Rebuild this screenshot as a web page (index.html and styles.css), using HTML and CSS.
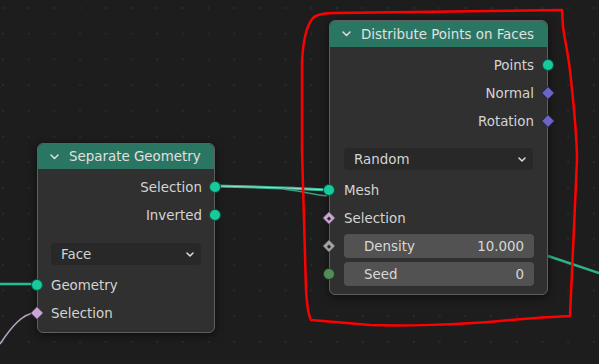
FILE: index.html
```html
<!DOCTYPE html>
<html lang="en">
<head>
    <meta charset="UTF-8">
    <title>Geometry Nodes</title>
    <link rel="stylesheet" href="styles.css">
</head>
<body>
    <div class="editor">
        <svg class="links" width="599" height="364" viewBox="0 0 599 364">
            <path d="M0 284 L37 284" stroke="#1fbf95" stroke-width="2.5" fill="none"/>
            <path d="M0 344 C12 326 22 314 37 312" stroke="#b5a2c0" stroke-width="1.6" fill="none"/>
            <path d="M215 186 C260 187 290 188 329 190" stroke="#3bb592" stroke-width="3" fill="none"/>
            <path d="M215 186 C260 187 290 188 329 190" stroke="#8fe3cb" stroke-width="1" fill="none"/>
            <path d="M283 189 C300 191 312 194 327 196" stroke="#3a9b80" stroke-width="1.5" fill="none"/>
            <path d="M548 256 L599 273" stroke="#2fb08b" stroke-width="2.5" fill="none"/>
        </svg>

        <!-- Separate Geometry -->
        <div class="node node-separate">
            <div class="node-header">
                <svg class="chev" width="9" height="6" viewBox="0 0 9 6"><polyline points="1,1 4.5,4.5 8,1" /></svg>
                <span>Separate Geometry</span>
            </div>
            <div class="node-body">
                <div class="row out"><span>Selection</span><i class="socket geo"></i></div>
                <div class="row out"><span>Inverted</span><i class="socket geo"></i></div>
                <div class="select select-sep">
                    <span>Face</span>
                    <svg class="chev-small" width="8" height="5" viewBox="0 0 8 5"><polyline points="1,1 4,4 7,1" /></svg>
                </div>
                <div class="row in row-gap"><i class="socket geo"></i><span>Geometry</span></div>
                <div class="row in"><i class="socket diamond bool"></i><span>Selection</span></div>
            </div>
        </div>

        <!-- Distribute Points on Faces -->
        <div class="node node-distribute">
            <div class="node-header">
                <svg class="chev" width="9" height="6" viewBox="0 0 9 6"><polyline points="1,1 4.5,4.5 8,1" /></svg>
                <span>Distribute Points on Faces</span>
            </div>
            <div class="node-body">
                <div class="row out"><span>Points</span><i class="socket geo"></i></div>
                <div class="row out"><span>Normal</span><i class="socket diamond vec"></i></div>
                <div class="row out"><span>Rotation</span><i class="socket diamond vec"></i></div>
                <div class="select select-dist">
                    <span>Random</span>
                    <svg class="chev-small" width="8" height="5" viewBox="0 0 8 5"><polyline points="1,1 4,4 7,1" /></svg>
                </div>
                <div class="row in row-gap"><i class="socket geo"></i><span>Mesh</span></div>
                <div class="row in"><i class="socket diamond bool dotted"></i><span>Selection</span></div>
                <div class="row in"><i class="socket diamond float dotted"></i>
                    <div class="value-field"><span>Density</span><span>10.000</span></div>
                </div>
                <div class="row in"><i class="socket int"></i>
                    <div class="value-field"><span>Seed</span><span>0</span></div>
                </div>
            </div>
        </div>

        <svg class="mark" width="599" height="364" viewBox="0 0 599 364">
            <path d="M302 62 C303 42 306 26 313 18 C317 14 324 13 336 13 L562 10 L563 27 C565 42 569 56 571 80 C574 108 577 135 577 160 L573 250 L570 316 C545 317 522 319 500 321 C460 325 400 326 370 325 L311 320 C308 315 307 305 306 290 L302 150 Z"
                  stroke="#ff0000" stroke-width="2.5" fill="none" stroke-linejoin="round"/>
        </svg>
    </div>
</body>
</html>
```

FILE: styles.css
```css
* {
    margin: 0;
    padding: 0;
    box-sizing: border-box;
}

body {
    width: 599px;
    height: 364px;
    overflow: hidden;
    background-color: #1d1d1d;
    background-image: radial-gradient(circle, #2a2a2a 0.9px, transparent 1.5px);
    background-size: 25.7px 25.7px;
    background-position: -9.85px -4.85px;
    font-family: "DejaVu Sans", sans-serif;
    font-size: 13.4px;
    color: #d4d4d4;
}

.editor {
    position: relative;
    width: 599px;
    height: 364px;
}

.links,
.mark {
    position: absolute;
    top: 0;
    left: 0;
}

.mark {
    z-index: 2;
    pointer-events: none;
}

/* nodes sit on a free canvas */
.node {
    position: absolute;
    z-index: 1;
    background: #303030;
    border: 1px solid #5e5e5e;
    border-radius: 6px;
    box-shadow: 0 2px 8px rgba(0, 0, 0, 0.55);
}

.node-separate {
    left: 37px;
    top: 143px;
    width: 178px;
}

.node-distribute {
    left: 329px;
    top: 20px;
    width: 219px;
}

.node-header {
    display: flex;
    align-items: center;
    gap: 10px;
    height: 25px;
    padding-left: 12px;
    background: #2b7663;
    border-radius: 5px 5px 0 0;
    color: #e0e0e0;
}

.node-distribute .node-header {
    height: 26px;
}

.chev polyline,
.chev-small polyline {
    fill: none;
    stroke: #dcdcdc;
    stroke-width: 1.5;
    stroke-linecap: round;
    stroke-linejoin: round;
}

.node-body {
    display: flex;
    flex-direction: column;
    padding: 4px 0 5px;
}

.node-distribute .node-body {
    padding-bottom: 6px;
}

.row {
    position: relative;
    display: flex;
    align-items: center;
    height: 28px;
    padding: 0 12px 0 13px;
}

.row.out {
    justify-content: flex-end;
}

.row-gap {
    margin-top: 6px;
}

/* sockets */
.socket {
    position: absolute;
    top: 50%;
    width: 12px;
    height: 12px;
    margin-top: -6px;
    border-radius: 50%;
    border: 1px solid rgba(0, 0, 0, 0.55);
}

.row.out .socket {
    right: -7px;
}

.row.in .socket {
    left: -7px;
}

.socket.diamond {
    width: 10px;
    height: 10px;
    margin-top: -5px;
    border-radius: 1px;
    transform: rotate(45deg);
}

.row.out .socket.diamond {
    right: -6px;
}

.row.in .socket.diamond {
    left: -6px;
}

.socket.dotted::after {
    content: '';
    position: absolute;
    top: 50%;
    left: 50%;
    width: 3px;
    height: 3px;
    margin: -1.5px 0 0 -1.5px;
    background: #2a2a2a;
}

.geo { background: #17c99b; }
.vec { background: #6d64c8; }
.bool { background: #c9a6d5; }
.float { background: #a3a3a3; }
.int { background: #528d58; }

/* dropdowns and value fields */
.select {
    display: flex;
    align-items: center;
    justify-content: space-between;
    height: 22px;
    margin: 14px 13px 0;
    padding: 0 7px 0 10px;
    background: #282828;
    border-radius: 4px;
}

.select-dist {
    margin: 13px 14px 0;
}

.value-field {
    flex: 1;
    display: flex;
    align-items: center;
    justify-content: space-between;
    height: 24px;
    padding: 0 10px 0 20px;
    background: #525252;
    border-radius: 4px;
    color: #d8d8d8;
}

.node-distribute .row {
    padding: 0 13px 0 14px;
}
```
